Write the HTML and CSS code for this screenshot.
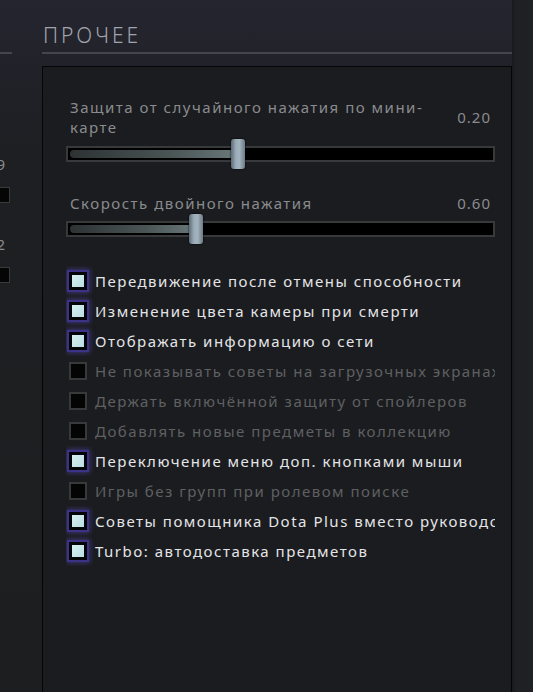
FILE: index.html
```html
<!DOCTYPE html>
<html lang="ru">
<head>
    <meta charset="UTF-8">
    <title>Прочее</title>
    <link rel="stylesheet" href="styles.css">
</head>
<body>
<div class="screen">
    <!-- Previous settings column, mostly scrolled out of view -->
    <aside class="side side-left">
        <div class="side-inner">
            <div class="side-rule"></div>
            <div class="side-value first">0.19</div>
            <div class="side-box"></div>
            <div class="side-value">0.32</div>
            <div class="side-box"></div>
        </div>
    </aside>

    <main class="section">
        <h1 class="section-title">Прочее</h1>
        <div class="section-rule"></div>

        <div class="panel">
            <div class="slider">
                <div class="slider-head">
                    <span class="slider-label">Защита от случайного нажатия по мини-карте</span>
                    <span class="slider-value">0.20</span>
                </div>
                <div class="slider-track">
                    <div class="slider-fill" style="width: 40%"></div>
                    <div class="slider-thumb" style="left: 40%"></div>
                </div>
            </div>

            <div class="slider slider-next">
                <div class="slider-head">
                    <span class="slider-label">Скорость двойного нажатия</span>
                    <span class="slider-value">0.60</span>
                </div>
                <div class="slider-track">
                    <div class="slider-fill" style="width: 30%"></div>
                    <div class="slider-thumb" style="left: 30%"></div>
                </div>
            </div>

            <ul class="options">
                <li class="option checked"><span class="box"></span>Передвижение после отмены способности</li>
                <li class="option checked"><span class="box"></span>Изменение цвета камеры при смерти</li>
                <li class="option checked"><span class="box"></span>Отображать информацию о сети</li>
                <li class="option"><span class="box"></span>Не показывать советы на загрузочных экранах</li>
                <li class="option"><span class="box"></span>Держать включённой защиту от спойлеров</li>
                <li class="option"><span class="box"></span>Добавлять новые предметы в коллекцию</li>
                <li class="option checked"><span class="box"></span>Переключение меню доп. кнопками мыши</li>
                <li class="option"><span class="box"></span>Игры без групп при ролевом поиске</li>
                <li class="option checked"><span class="box"></span>Советы помощника Dota Plus вместо руководств</li>
                <li class="option checked"><span class="box"></span>Turbo: автодоставка предметов</li>
            </ul>
        </div>
    </main>

    <aside class="side side-right"></aside>
</div>
</body>
</html>
```

FILE: styles.css
```css
html, body {
    margin: 0;
    height: 100%;
}
body {
    font-family: 'Noto Sans', 'DejaVu Sans', sans-serif;
    background: linear-gradient(180deg, #24252f 0%, #212229 70px, #1e1f22 160px, #1d1e20 100%);
    overflow: hidden;
}
.screen {
    display: grid;
    grid-template-columns: 42px 470px 21px;
    height: 692px;
}

/* side columns */
.side {
    overflow: hidden;
}
.side-inner {
    width: 12px;
    display: flex;
    flex-direction: column;
    align-items: flex-end;
}
.side-rule {
    width: 12px;
    height: 2px;
    margin-top: 52px;
    background: #45464d;
}
.side-value {
    font-size: 15px;
    line-height: 20px;
    color: #8a8b8f;
    letter-spacing: 1px;
    margin-right: 6px;
    margin-top: 31px;
    white-space: nowrap;
}
.side-value.first {
    margin-top: 100px;
}
.side-box {
    width: 14px;
    height: 14px;
    flex: none;
    margin-top: 13px;
    margin-right: 2px;
    border: 1px solid #3a3a3c;
    background: #050506;
}
.side-right {
    background: linear-gradient(90deg, #18191b 0, #1f2023 3px, #202124 100%);
}

/* section */
.section {
    display: flex;
    flex-direction: column;
    min-width: 0;
}
.section-title {
    margin: 22px 0 0 1px;
    font-size: 21px;
    font-weight: 300;
    line-height: 26px;
    letter-spacing: 3px;
    text-transform: uppercase;
    color: #a2a4ad;
}
.section-rule {
    height: 2px;
    margin-top: 4px;
    background: #45464d;
}
.panel {
    flex: 1;
    margin-top: 12px;
    padding: 30px 16px 0 23px;
    border: 1px solid #050506;
    border-bottom: none;
    background: #1b1c1f;
    overflow: hidden;
}

/* sliders */
.slider-next {
    margin-top: 31px;
}
.slider-head {
    display: flex;
    justify-content: space-between;
    align-items: center;
    padding: 0 4px;
    font-size: 15px;
    line-height: 20px;
    letter-spacing: 1.5px;
    color: #8a8b8f;
}
.slider-label {
    max-width: 380px;
}
.slider-value {
    letter-spacing: 1px;
}
.slider-track {
    position: relative;
    height: 12px;
    margin-top: 9px;
    border: 2px solid #38393b;
    background: #000;
}
.slider-next .slider-track {
    margin-top: 8px;
}
.slider-fill {
    height: 8px;
    margin: 2px 0 0 2px;
    border-radius: 4px;
    background: linear-gradient(90deg, #2d3233 0%, #4a5556 60%, #6b7a7c 100%);
}
.slider-thumb {
    position: absolute;
    top: -9px;
    width: 14px;
    height: 30px;
    margin-left: -7px;
    border-radius: 3px;
    background: linear-gradient(90deg, #5d6b75 0%, #9aacb8 35%, #a4b4bf 60%, #6c7b86 100%);
    box-shadow: 0 0 2px #000;
}

/* checkbox list */
.options {
    list-style: none;
    margin: 29px 0 0 0;
    padding: 0;
}
.option {
    display: flex;
    align-items: center;
    gap: 8px;
    height: 30px;
    font-size: 15px;
    letter-spacing: 1.5px;
    color: #5f6062;
    white-space: nowrap;
    overflow: hidden;
}
.option .box {
    flex: none;
    box-sizing: border-box;
    width: 18px;
    height: 18px;
    margin-left: 3px;
    border: 2px solid #38393b;
    background: #040405;
}
.option.checked {
    color: #e4e5e8;
}
.option.checked .box {
    border: 3px solid #050508;
    background: linear-gradient(135deg, #d8f0f2 0%, #b8dde2 100%);
    box-shadow: 0 0 0 2px #3b3486, 0 0 5px 3px rgba(90, 78, 200, 0.5);
}
```
